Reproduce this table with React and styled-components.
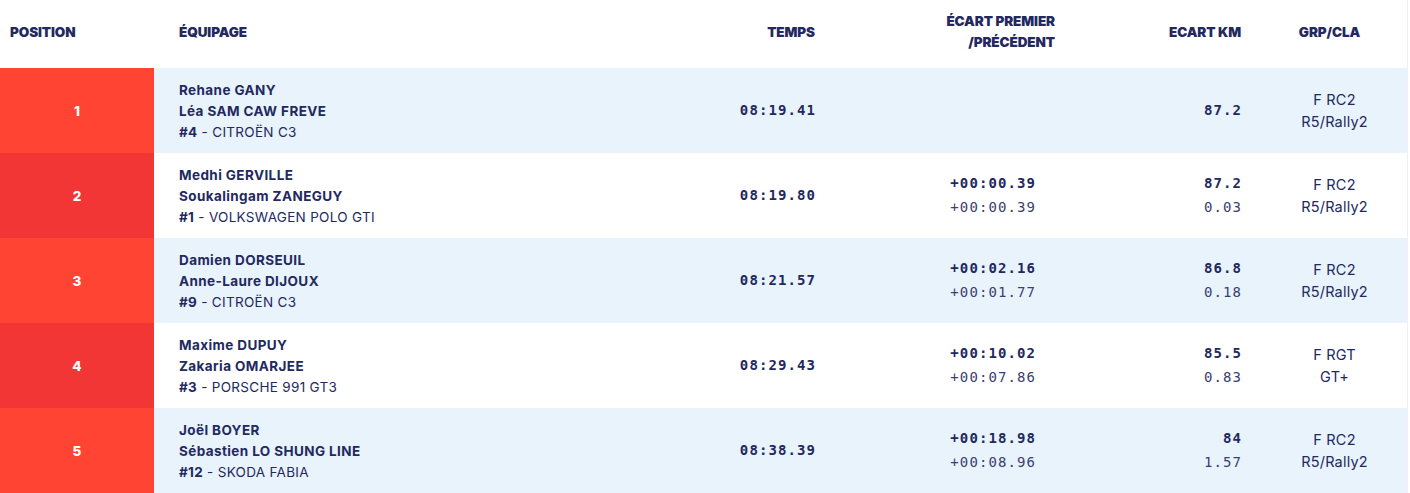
import React from "react";
import styled, { createGlobalStyle } from "styled-components";

const Global = createGlobalStyle`
  html, body { margin: 0; padding: 0; background: #ffffff; }
  body { font-family: "Inter", "Open Sans", sans-serif; color: #23295f; }
`;

const NAVY = "#23295f";
const cols = "154px 531px 130px 240px 201px 1fr";

const Table = styled.div`
  width: 1407px;
  border-right: 1px solid #eef0f3;
`;

const HeaderRow = styled.div`
  display: grid;
  grid-template-columns: ${cols};
  height: 68px;
  background: #ffffff;
`;

const HeadCell = styled.div`
  display: flex;
  align-items: center;
  justify-content: ${(p) => p.$justify || "flex-start"};
  text-align: ${(p) => p.$align || "left"};
  padding: 0 ${(p) => p.$pr || 0}px 4px ${(p) => p.$pl || 0}px;
  font-family: "Inter", sans-serif;
  font-weight: 900;
  font-size: 13.5px;
  letter-spacing: -0.1px;
  line-height: 21px;
  color: ${NAVY};
  text-transform: uppercase;
`;

const Row = styled.div`
  display: grid;
  grid-template-columns: ${cols};
  height: 85px;
  background: ${(p) => (p.$alt ? "#ffffff" : "#e8f3fc")};
`;

const PosCell = styled.div`
  display: flex;
  align-items: center;
  justify-content: center;
  background: ${(p) => (p.$alt ? "#f23535" : "#ff4433")};
  color: #ffffff;
  font-family: "Inter", sans-serif;
  font-weight: 800;
  font-size: 13.5px;
`;

const CrewCell = styled.div`
  display: flex;
  flex-direction: column;
  justify-content: center;
  padding: 2px 0 0 25px;
  font-family: "Inter", sans-serif;
  font-size: 13.5px;
  line-height: 21px;
  color: ${NAVY};
`;

const Driver = styled.div`
  font-weight: 700;
  letter-spacing: 0.4px;
`;

const Car = styled.div`
  font-weight: 400;
  letter-spacing: 0.3px;
  b { font-weight: 700; }
`;

const MonoCell = styled.div`
  display: flex;
  flex-direction: column;
  justify-content: center;
  align-items: flex-end;
  padding: 0 ${(p) => p.$pr || 0}px 2px 0;
  font-family: "DejaVu Sans Mono", "Liberation Mono", monospace;
  font-size: 14px;
  letter-spacing: 1.1px;
  line-height: 24px;
  color: ${NAVY};
`;

const MonoStrong = styled.span`
  font-weight: 700;
  margin-right: -1.1px;
`;

const MonoLight = styled.span`
  font-weight: 400;
  color: #3a4070;
  margin-right: -1.1px;
`;

const GroupCell = styled.div`
  display: flex;
  flex-direction: column;
  justify-content: center;
  align-items: center;
  padding-left: 6px;
  font-family: "Inter", sans-serif;
  font-size: 14.5px;
  letter-spacing: 0.2px;
  line-height: 22px;
  color: ${NAVY};
`;

const data = [
  { pos: 1, d1: "Rehane GANY", d2: "Léa SAM CAW FREVE", num: "#4", car: "CITROËN C3", time: "08:19.41", gap1: "", gap2: "", km: "87.2", kmg: "", g1: "F RC2", g2: "R5/Rally2" },
  { pos: 2, d1: "Medhi GERVILLE", d2: "Soukalingam ZANEGUY", num: "#1", car: "VOLKSWAGEN POLO GTI", time: "08:19.80", gap1: "+00:00.39", gap2: "+00:00.39", km: "87.2", kmg: "0.03", g1: "F RC2", g2: "R5/Rally2" },
  { pos: 3, d1: "Damien DORSEUIL", d2: "Anne-Laure DIJOUX", num: "#9", car: "CITROËN C3", time: "08:21.57", gap1: "+00:02.16", gap2: "+00:01.77", km: "86.8", kmg: "0.18", g1: "F RC2", g2: "R5/Rally2" },
  { pos: 4, d1: "Maxime DUPUY", d2: "Zakaria OMARJEE", num: "#3", car: "PORSCHE 991 GT3", time: "08:29.43", gap1: "+00:10.02", gap2: "+00:07.86", km: "85.5", kmg: "0.83", g1: "F RGT", g2: "GT+" },
  { pos: 5, d1: "Joël BOYER", d2: "Sébastien LO SHUNG LINE", num: "#12", car: "SKODA FABIA", time: "08:38.39", gap1: "+00:18.98", gap2: "+00:08.96", km: "84", kmg: "1.57", g1: "F RC2", g2: "R5/Rally2" },
];

export default function App() {
  return (
    <>
      <Global />
      <Table>
        <HeaderRow>
          <HeadCell $pl={10}>Position</HeadCell>
          <HeadCell $pl={25}>Équipage</HeadCell>
          <HeadCell $justify="flex-end" $align="right">Temps</HeadCell>
          <HeadCell $justify="flex-end" $align="right">
            Écart premier
            <br />
            /précédent
          </HeadCell>
          <HeadCell $justify="flex-end" $align="right" $pr={15}>Ecart km</HeadCell>
          <HeadCell $justify="center" $align="center" $pr={4}>GRP/CLA</HeadCell>
        </HeaderRow>
        {data.map((r, i) => {
          const alt = i % 2 === 1;
          return (
            <Row key={r.pos} $alt={alt}>
              <PosCell $alt={alt}>{r.pos}</PosCell>
              <CrewCell>
                <Driver>{r.d1}</Driver>
                <Driver>{r.d2}</Driver>
                <Car>
                  <b>{r.num}</b> - {r.car}
                </Car>
              </CrewCell>
              <MonoCell>
                <MonoStrong>{r.time}</MonoStrong>
              </MonoCell>
              <MonoCell $pr={20}>
                {r.gap1 && <MonoStrong>{r.gap1}</MonoStrong>}
                {r.gap2 && <MonoLight>{r.gap2}</MonoLight>}
              </MonoCell>
              <MonoCell $pr={15}>
                <MonoStrong>{r.km}</MonoStrong>
                {r.kmg && <MonoLight>{r.kmg}</MonoLight>}
              </MonoCell>
              <GroupCell>
                <span>{r.g1}</span>
                <span>{r.g2}</span>
              </GroupCell>
            </Row>
          );
        })}
      </Table>
    </>
  );
}
